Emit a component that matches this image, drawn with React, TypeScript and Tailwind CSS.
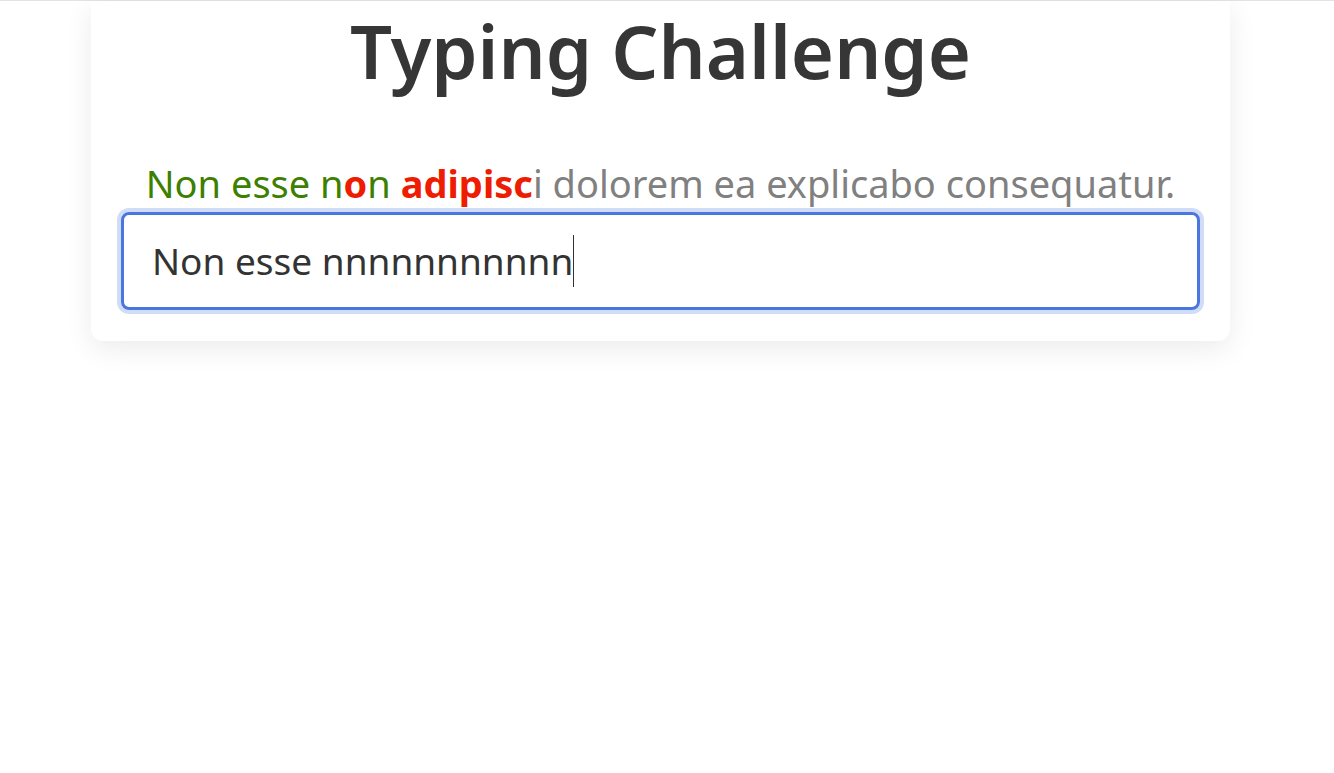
import React from "react";

export default function App() {
  const font = { fontFamily: '"Noto Sans", "Open Sans", sans-serif' };
  return (
    <div className="min-h-[773px] bg-white border-t border-[#e2e2e8]" style={font}>
      <div className="ml-[91px] w-[1139px] bg-white rounded-b-xl shadow-[0_8px_28px_rgba(0,0,0,0.08)] px-[30px] pb-[31px]">
        <h1 className="text-center text-[74px] leading-[100px] font-semibold text-[#363636]">Typing Challenge</h1>
        <p className="text-center text-[38px] leading-[50px] mt-[57px]">
          <span className="text-[#3d7f00]">Non esse n</span>
          <span className="text-[#ee1c00] font-bold">o</span>
          <span className="text-[#3d7f00]">n </span>
          <span className="text-[#ee1c00] font-bold">adipisc</span>
          <span className="text-[#808080]">i dolorem ea explicabo consequatur.</span>
        </p>
        <div className="mt-[4px] h-[98px] rounded-lg border-[3px] border-[#4a76e0] ring-4 ring-[#d0dcf8] flex items-center px-[28px]">
          <span className="text-[37px] text-[#333]">Non esse nnnnnnnnnnn</span>
          <span className="w-px h-[52px] bg-[#333]" />
        </div>
      </div>
    </div>
  );
}
